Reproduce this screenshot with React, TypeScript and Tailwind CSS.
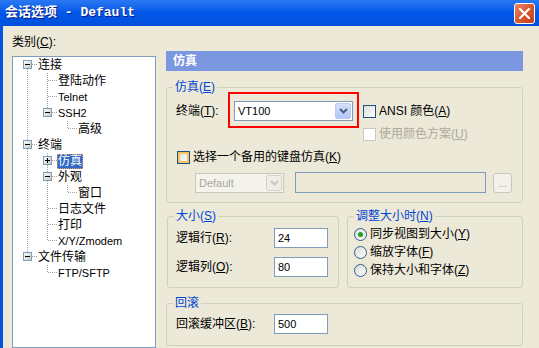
import React from "react"

const F = "font-['Liberation_Sans','Noto_Sans_CJK_SC',sans-serif]"

// accelerator key, e.g. (C)
const K = ({ k }: { k: string }) => (
  <>
    (<u>{k}</u>)
  </>
)

type Row = {
  label: string
  guides: boolean[]
  next: boolean
  first?: boolean
  exp?: "+" | "-"
  sel?: boolean
  latin?: boolean
}

const rows: Row[] = [
  { label: "连接", guides: [], next: true, first: true, exp: "-" },
  { label: "登陆动作", guides: [true], next: true },
  { label: "Telnet", guides: [true], next: true, latin: true },
  { label: "SSH2", guides: [true], next: false, exp: "-", latin: true },
  { label: "高级", guides: [true, false], next: false },
  { label: "终端", guides: [], next: true, exp: "-" },
  { label: "仿真", guides: [true], next: true, exp: "+", sel: true },
  { label: "外观", guides: [true], next: true, exp: "-" },
  { label: "窗口", guides: [true, true], next: false },
  { label: "日志文件", guides: [true], next: true },
  { label: "打印", guides: [true], next: true },
  { label: "X/Y/Zmodem", guides: [true], next: false, latin: true },
  { label: "文件传输", guides: [], next: false, exp: "-" },
  { label: "FTP/SFTP", guides: [false], next: false, latin: true },
]

const dot = { stroke: "#a0a0a0", strokeDasharray: "1 1" }

const TreeRow = ({ r, i }: { r: Row; i: number }) => (
  <div className="flex h-[16px] items-center">
    {r.guides.map((g, j) => (
      <svg key={j} width="20" height="16" className="shrink-0">
        {g && <line x1="10.5" y1="0" x2="10.5" y2="16" {...dot} />}
      </svg>
    ))}
    <svg width="20" height="16" className="shrink-0">
      <defs>
        <linearGradient id={`eb${i}`} x1="0" y1="0" x2="1" y2="1">
          <stop offset="0" stopColor="#ffffff" />
          <stop offset="1" stopColor="#c8c8bc" />
        </linearGradient>
      </defs>
      {!r.first && <line x1="10.5" y1="0" x2="10.5" y2="8" {...dot} />}
      {r.next && <line x1="10.5" y1="8" x2="10.5" y2="16" {...dot} />}
      <line x1="11" y1="7.5" x2="20" y2="7.5" {...dot} />
      {r.exp && (
        <>
          <rect x="6.5" y="3.5" width="8" height="8" fill={`url(#eb${i})`} stroke="#7f9db9" />
          <line x1="8" y1="7.5" x2="13" y2="7.5" stroke="#000" />
          {r.exp === "+" && <line x1="10.5" y1="5" x2="10.5" y2="10" stroke="#000" />}
        </>
      )}
    </svg>
    <span
      className={`border leading-[13px] whitespace-nowrap ${r.latin ? "text-[11px]" : "text-[12px]"} ${
        r.sel ? "border-dotted border-[#e9a15a] bg-[#316ac5] text-white" : "border-transparent"
      }`}
    >
      {r.label}
    </span>
  </div>
)

const Chevron = ({ c }: { c: string }) => (
  <svg width="9" height="6" viewBox="0 0 9 6">
    <polyline points="1,1 4.5,4.5 8,1" fill="none" stroke={c} strokeWidth="2" />
  </svg>
)

const Check = ({ children, disabled, hover }: { children: React.ReactNode; disabled?: boolean; hover?: boolean }) => (
  <div className="flex h-[13px] items-center gap-[3px]">
    {disabled ? (
      <span className="h-[13px] w-[13px] shrink-0 border border-[#cac8bb] bg-white" />
    ) : hover ? (
      <span className="h-[13px] w-[13px] shrink-0 border border-[#1c5180] bg-gradient-to-br from-[#dcdcd7] to-white shadow-[inset_0_0_0_2px_#f8c35c]" />
    ) : (
      <span className="h-[13px] w-[13px] shrink-0 border border-[#1c5180] bg-gradient-to-br from-[#dcdcd7] to-white" />
    )}
    <span className={`whitespace-nowrap text-[12px] leading-[13px] ${disabled ? "text-[#aca899]" : ""}`}>{children}</span>
  </div>
)

const Radio = ({ children, on }: { children: React.ReactNode; on?: boolean }) => (
  <div className="flex h-[13px] items-center gap-[3px]">
    <span className="flex h-[13px] w-[13px] shrink-0 items-center justify-center rounded-full border border-[#2c5d8f] bg-gradient-to-br from-[#dcdcd7] to-white">
      {on && <span className="h-[5px] w-[5px] rounded-full bg-[#21a121]" />}
    </span>
    <span className="whitespace-nowrap text-[12px] leading-[13px]">{children}</span>
  </div>
)

const Num = ({ v }: { v: string }) => (
  <div className="h-[20px] w-[54px] border border-[#7f9db9] bg-white pl-[3px] text-[11px] leading-[18px]">{v}</div>
)

export default function App() {
  return (
    <div className={`flex h-[348px] w-[539px] flex-col overflow-hidden bg-[#ece9d8] text-black ${F}`}>
      {/* title bar */}
      <div className="flex h-[26px] shrink-0 items-center justify-between bg-gradient-to-b from-[#2a78f2] via-[#0157e8] to-[#0150dc] pl-[5px] pr-[4px]">
        <span className="whitespace-pre font-['Liberation_Mono','Noto_Sans_CJK_SC',monospace] text-[13px] font-bold leading-[16px] text-white [text-shadow:1px_1px_#0a1883]">
          会话选项 - Default
        </span>
        <div className="flex h-[21px] w-[21px] items-center justify-center rounded-[3px] border border-white bg-gradient-to-br from-[#e8866a] via-[#d9582f] to-[#c2401a]">
          <svg width="11" height="11" viewBox="0 0 11 11">
            <path d="M1 1 L10 10 M10 1 L1 10" stroke="#fff" strokeWidth="2.2" strokeLinecap="square" />
          </svg>
        </div>
      </div>

      <div className="flex min-h-0 flex-1">
        <div className="w-[3px] shrink-0 bg-[#0553e1]" />

        {/* category tree */}
        <div className="ml-[9px] flex w-[144px] shrink-0 flex-col pt-[9px]">
          <span className="text-[12px] leading-[14px]">
            类别<K k="C" />:
          </span>
          <div className="mt-[7px] h-[300px] border border-[#7f9db9] bg-white pl-[4px]">
            {rows.map((r, i) => (
              <TreeRow key={i} r={r} i={i} />
            ))}
          </div>
        </div>

        {/* right page */}
        <div className="ml-[10px] w-[357px] shrink-0 pt-[25px]">
          <div className="h-[20px] bg-[#7b97e0] pl-[7px] text-[12px] font-bold leading-[20px] text-white">仿真</div>

          <fieldset className="mt-[9px] h-[123px] rounded-[3px] border border-[#d0d0bf]">
            <legend className="ml-[6px] px-[2px] text-[12px] leading-[14px] text-[#0046d5]">
              仿真<K k="E" />
            </legend>
            <div className="-mt-[2px] flex items-start pl-[9px]">
              <span className="mt-[12px] w-[52px] text-[12px] leading-[14px]">
                终端<K k="T" />:
              </span>
              <div className="h-[36px] w-[131px] border-2 border-[#ff0000] pl-[4px] pt-[7px]">
                <div className="flex h-[20px] w-[119px] items-center justify-between border border-[#7f9db9] bg-white pl-[3px] pr-[1px]">
                  <span className="text-[11px]">VT100</span>
                  <span className="flex h-[16px] w-[16px] items-center justify-center rounded-[2px] border border-[#b9cbf3] bg-gradient-to-b from-[#d4e0fc] to-[#b2c7f6]">
                    <Chevron c="#4d6185" />
                  </span>
                </div>
              </div>
              <div className="ml-[4px] mt-[13px] flex flex-col gap-[10px]">
                <Check>
                  ANSI 颜色<K k="A" />
                </Check>
                <Check disabled>
                  使用颜色方案<K k="U" />
                </Check>
              </div>
            </div>
            <div className="mt-[10px] pl-[10px]">
              <Check hover>
                选择一个备用的键盘仿真<K k="K" />
              </Check>
            </div>
            <div className="mt-[8px] flex items-start pl-[28px]">
              <div className="mt-[1px] flex h-[20px] w-[89px] items-center justify-between border border-[#c9c7ba] bg-[#f4f3ee] pl-[3px] pr-[1px]">
                <span className="text-[11px] text-[#aca899]">Default</span>
                <span className="flex h-[16px] w-[16px] items-center justify-center rounded-[2px] border border-[#d6d3c6] bg-[#efeee6]">
                  <Chevron c="#c9c7ba" />
                </span>
              </div>
              <div className="ml-[11px] h-[21px] w-[191px] border border-[#7f9db9] bg-[#ece9d8]" />
              <div className="ml-[7px] mt-[1px] flex h-[20px] w-[19px] items-end justify-center rounded-[3px] border border-[#c9c7ba] bg-[#f3f2ea] pb-[3px] text-[11px] leading-[11px] text-[#aca899]">
                ...
              </div>
            </div>
          </fieldset>

          <div className="mt-[6px] flex">
            <fieldset className="ml-[1px] h-[79px] w-[172px] rounded-[3px] border border-[#d0d0bf]">
              <legend className="ml-[6px] px-[2px] text-[12px] leading-[14px] text-[#0046d5]">
                大小<K k="S" />
              </legend>
              <div className="mt-[5px] flex items-center pl-[8px]">
                <span className="w-[98px] text-[12px] leading-[14px]">
                  逻辑行<K k="R" />:
                </span>
                <Num v="24" />
              </div>
              <div className="mt-[9px] flex items-center pl-[8px]">
                <span className="w-[98px] text-[12px] leading-[14px]">
                  逻辑列<K k="O" />:
                </span>
                <Num v="80" />
              </div>
            </fieldset>
            <fieldset className="ml-[8px] h-[79px] w-[176px] rounded-[3px] border border-[#d0d0bf]">
              <legend className="ml-[6px] px-[2px] text-[12px] leading-[14px] text-[#0046d5]">
                调整大小时<K k="N" />
              </legend>
              <div className="mt-[5px] flex flex-col gap-[5px] pl-[6px]">
                <Radio on>
                  同步视图到大小<K k="Y" />
                </Radio>
                <Radio>
                  缩放字体<K k="F" />
                </Radio>
                <Radio>
                  保持大小和字体<K k="Z" />
                </Radio>
              </div>
            </fieldset>
          </div>

          <fieldset className="mt-[8px] h-[50px] rounded-[3px] border border-[#d0d0bf]">
            <legend className="ml-[6px] px-[2px] text-[12px] leading-[14px] text-[#0046d5]">回滚</legend>
            <div className="mt-[4px] flex items-center pl-[9px]">
              <span className="w-[98px] text-[12px] leading-[14px]">
                回滚缓冲区<K k="B" />:
              </span>
              <Num v="500" />
            </div>
          </fieldset>
        </div>
      </div>
    </div>
  )
}
